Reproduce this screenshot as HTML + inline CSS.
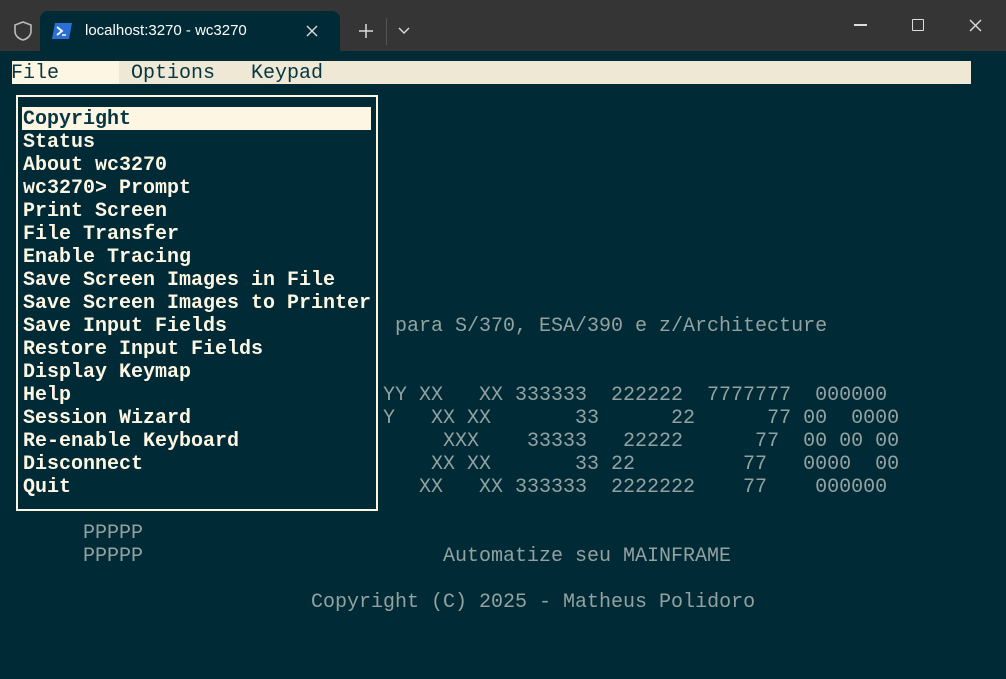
<!DOCTYPE html>
<html><head><meta charset="utf-8"><style>
*{margin:0;padding:0;box-sizing:border-box}
html,body{width:1006px;height:679px;overflow:hidden;background:#002b36}
.tb{position:absolute;left:0;top:0;width:1006px;height:51px;background:#353535}
.tab{position:absolute;left:40px;top:11px;width:300px;height:40px;background:#002b36;border-radius:8px 8px 0 0}
.tt{position:absolute;left:85px;top:22px;font:15px "Liberation Sans",sans-serif;color:#fff}
.t{position:absolute;font-family:"Liberation Mono",monospace;font-size:20px;line-height:23px;height:23px;white-space:pre;color:#93a1a1;margin-top:1px}
.m{color:#fdf6e3;font-weight:bold}
</style></head><body>
<div class="tb"></div>
<svg style="position:absolute;left:12px;top:20px" width="22" height="22" viewBox="0 0 22 22"><path d="M11 2 L19 5 V11 C19 16 15 19 11 20 C7 19 3 16 3 11 V5 Z" fill="none" stroke="#bbb" stroke-width="1.6"/></svg>
<div class="tab"></div>
<svg style="position:absolute;left:52px;top:23px" width="20" height="16" viewBox="0 0 20 16"><path d="M3 0 H20 L17 16 H0 Z" fill="#2a6fd6"/><path d="M5 4 L10 8 L5 12" fill="none" stroke="#fff" stroke-width="1.8"/><path d="M10 12 H14" stroke="#fff" stroke-width="1.5"/></svg>
<div class="tt">localhost:3270 - wc3270</div>
<svg style="position:absolute;left:306px;top:25px" width="12" height="12"><path d="M1 1 L11 11 M11 1 L1 11" stroke="#ddd" stroke-width="1.4"/></svg>
<svg style="position:absolute;left:359px;top:24px" width="14" height="14"><path d="M7 0 V14 M0 7 H14" stroke="#ddd" stroke-width="1.5"/></svg>
<div style="position:absolute;left:386px;top:18px;width:1px;height:27px;background:#555"></div>
<svg style="position:absolute;left:398px;top:27px" width="12" height="8"><path d="M1 1 L6 6 L11 1" fill="none" stroke="#ddd" stroke-width="1.4"/></svg>
<div style="position:absolute;left:854px;top:24px;width:13px;height:1.5px;background:#ddd"></div>
<div style="position:absolute;left:912px;top:19px;width:12px;height:12px;border:1.5px solid #ddd;border-radius:1px"></div>
<svg style="position:absolute;left:969px;top:19px" width="13" height="13"><path d="M1 1 L12 12 M12 1 L1 12" stroke="#ddd" stroke-width="1.4"/></svg>

<div style="position:absolute;left:12px;top:61px;width:959px;height:23px;background:#eee8d5"></div>
<div style="position:absolute;left:12px;top:61px;width:107px;height:23px;background:#fdf6e3"></div>
<div class="t" style="left:11px;top:61px;color:#073642">File      Options   Keypad</div>

<div style="position:absolute;left:16px;top:95px;width:362px;height:416px;border:2px solid #fdf6e3"></div>
<div style="position:absolute;left:22px;top:107px;width:349px;height:23px;background:#fdf6e3"></div>
<div class="t m" style="left:23px;top:107px;color:#073642">Copyright</div>
<div class="t m" style="left:23px;top:130px">Status</div>
<div class="t m" style="left:23px;top:153px">About wc3270</div>
<div class="t m" style="left:23px;top:176px">wc3270&gt; Prompt</div>
<div class="t m" style="left:23px;top:199px">Print Screen</div>
<div class="t m" style="left:23px;top:222px">File Transfer</div>
<div class="t m" style="left:23px;top:245px">Enable Tracing</div>
<div class="t m" style="left:23px;top:268px">Save Screen Images in File</div>
<div class="t m" style="left:23px;top:291px">Save Screen Images to Printer</div>
<div class="t m" style="left:23px;top:314px">Save Input Fields</div>
<div class="t m" style="left:23px;top:337px">Restore Input Fields</div>
<div class="t m" style="left:23px;top:360px">Display Keymap</div>
<div class="t m" style="left:23px;top:383px">Help</div>
<div class="t m" style="left:23px;top:406px">Session Wizard</div>
<div class="t m" style="left:23px;top:429px">Re-enable Keyboard</div>
<div class="t m" style="left:23px;top:452px">Disconnect</div>
<div class="t m" style="left:23px;top:475px">Quit</div>

<div class="t" style="left:395px;top:314px">para S/370, ESA/390 e z/Architecture</div>
<div class="t" style="left:383px;top:383px">YY XX   XX 333333  222222  7777777  000000</div>
<div class="t" style="left:383px;top:406px">Y   XX XX       33      22      77 00  0000</div>
<div class="t" style="left:383px;top:429px">     XXX    33333   22222      77  00 00 00</div>
<div class="t" style="left:383px;top:452px">    XX XX       33 22         77   0000  00</div>
<div class="t" style="left:383px;top:475px">   XX   XX 333333  2222222    77    000000</div>
<div class="t" style="left:83px;top:521px">PPPPP</div>
<div class="t" style="left:83px;top:544px">PPPPP</div>
<div class="t" style="left:443px;top:544px">Automatize seu MAINFRAME</div>
<div class="t" style="left:311px;top:590px">Copyright (C) 2025 - Matheus Polidoro</div>
</body></html>
